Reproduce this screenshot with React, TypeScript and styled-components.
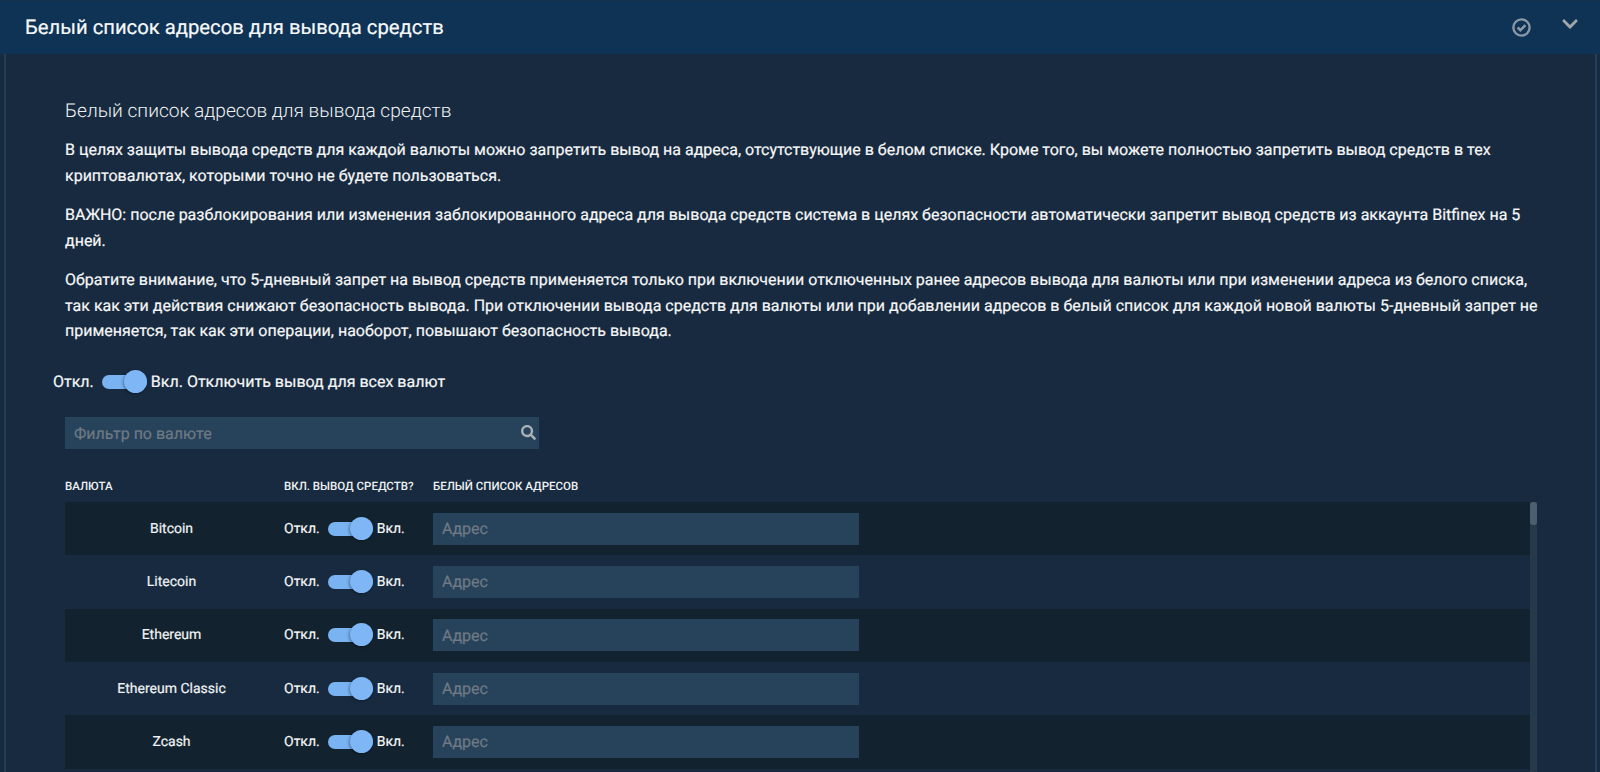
import React from 'react';
import styled, { createGlobalStyle } from 'styled-components';
import { FaChevronDown, FaSearch } from 'react-icons/fa';

const GlobalStyle = createGlobalStyle`
	html, body {
		margin: 0;
		height: 100%;
		overflow: hidden;
		background-color: #172a3f;
		font-family: Roboto, "Noto Sans", sans-serif;
		color: #f4f6f8;
		text-rendering: geometricPrecision;
		-webkit-text-stroke: 0.2px;
	}
	* {
		box-sizing: border-box;
	}
`;

const Panel = styled.div`
	display: flex;
	flex-direction: column;
	height: 772px;
	overflow: hidden;
`;

const Header = styled.header`
	display: flex;
	flex: none;
	align-items: center;
	height: 54px;
	padding: 0 21px 1px 25px;
	background-color: #0e3355;
	border-top: 1px solid #15304a;
`;

const HeaderTitle = styled.h1`
	flex: 1;
	margin: 0;
	font-size: 20.25px;
	font-weight: 400;
	color: #f7f8f9;
`;

const HeaderIcons = styled.div`
	display: flex;
	align-items: flex-start;
	gap: 30px;
	color: #8b98a6;
`;

const Chevron = styled(FaChevronDown)`
	width: 18px;
	height: 18px;
	margin-top: -3px;
	color: #a3a6a8;
`;

const Body = styled.main`
	display: flex;
	flex: 1;
	flex-direction: column;
	min-height: 0;
	margin: 0 3px 0 4px;
	padding: 46px 0 0 59px;
	border-left: 2px solid #223f59;
	border-right: 2px solid #223f59;
	background-color: #172a3f;
`;

const Heading = styled.h2`
	margin: 0 0 15px;
	font-size: 19.15px;
	line-height: 22px;
	font-weight: 300;
	-webkit-text-stroke: 0;
	color: #eef1f3;
`;

const Paragraph = styled.p`
	margin: 0 0 14px;
	width: 1480px;
	font-size: 16px;
	line-height: 25.5px;
	color: #f6f7f8;
`;

const MasterSwitch = styled.div`
	display: flex;
	align-items: center;
	height: 24px;
	margin: 12px 0 0 -12px;
	font-size: 16px;
`;

const SwitchRow = styled.div`
	display: flex;
	align-items: center;
	font-size: 14px;
	color: #f6f7f8;
`;

const Track = styled.span`
	position: relative;
	display: block;
	flex: none;
	width: 45px;
	height: 14px;
	margin: 0 4px 0 8px;
	border-radius: 7px;
	background-color: #79b3f2;
`;

const Knob = styled.span`
	position: absolute;
	top: -5px;
	right: 0;
	width: 23px;
	height: 23px;
	border-radius: 50%;
	background-color: #7fb6f6;
	box-shadow: -1px 1px 3px rgba(0, 0, 0, 0.35);
`;

const FilterBox = styled.div`
	position: relative;
	flex: none;
	width: 474px;
	margin-top: 23.5px;
`;

const FilterInput = styled.input`
	display: block;
	width: 100%;
	height: 32px;
	padding: 0 30px 0 9px;
	border: 0;
	background-color: #27435b;
	font: 16px Roboto, sans-serif;
	text-rendering: geometricPrecision;
	color: #f6f7f8;
	&::placeholder {
		color: #6f7a84;
		opacity: 1;
	}
`;

const SearchIcon = styled(FaSearch)`
	position: absolute;
	top: 8px;
	right: 3px;
	width: 15px;
	height: 15px;
	color: #a9b0b6;
`;

const ColumnHeader = styled.div`
	display: grid;
	flex: none;
	grid-template-columns: 219px 149px 1fr;
	align-items: center;
	height: 53px;
	padding-top: 20px;
	font-size: 11.5px;
	font-weight: 500;
	-webkit-text-stroke: 0;
	color: #eef1f3;
`;

const TableScroll = styled.div`
	display: flex;
	flex: 1;
	width: 1472px;
	min-height: 0;
`;

const Rows = styled.div`
	flex: 1;
`;

const Row = styled.div<{ $dark: boolean }>`
	display: grid;
	grid-template-columns: 219px 149px 1fr;
	align-items: center;
	height: 53.33px;
	background-color: ${(p) => (p.$dark ? '#12232f' : '#172a3f')};
`;

const CurrencyName = styled.div`
	padding-right: 6px;
	text-align: center;
	font-size: 14px;
	font-weight: 400;
	color: #f0f2f4;
`;

const AddressInput = styled.input`
	display: block;
	width: 426px;
	height: 32px;
	padding: 0 9px;
	border: 0;
	background-color: #27435b;
	font: 16px Roboto, sans-serif;
	text-rendering: geometricPrecision;
	color: #f6f7f8;
	&::placeholder {
		color: #6f7a84;
		opacity: 1;
	}
`;

const ScrollTrack = styled.div`
	position: relative;
	flex: none;
	width: 7px;
	background-color: #25394a;
`;

const ScrollThumb = styled.div`
	position: absolute;
	top: 0;
	left: 0;
	width: 7px;
	height: 23px;
	border-radius: 3px;
	background-color: #4c5f70;
`;

const currencies = ['Bitcoin', 'Litecoin', 'Ethereum', 'Ethereum Classic', 'Zcash'];

function Toggle() {
	return (
		<Track>
			<Knob />
		</Track>
	);
}

function CheckCircle() {
	return (
		<svg width="19" height="19" viewBox="0 0 19 19" fill="none" stroke="currentColor">
			<circle cx="9.5" cy="9.5" r="8.1" strokeWidth="2.4" />
			<path d="M5.6 9.5l2.8 2.7 5-5" strokeWidth="2.6" />
		</svg>
	);
}

function App() {
	return (
		<Panel>
			<GlobalStyle />
			<Header>
				<HeaderTitle>Белый список адресов для вывода средств</HeaderTitle>
				<HeaderIcons>
					<CheckCircle />
					<Chevron />
				</HeaderIcons>
			</Header>
			<Body>
				<Heading>Белый список адресов для вывода средств</Heading>
				<Paragraph>
					В целях защиты вывода средств для каждой валюты можно запретить вывод на адреса, отсутствующие в белом списке. Кроме того, вы можете полностью запретить вывод средств в тех криптовалютах, которыми точно не будете пользоваться.
				</Paragraph>
				<Paragraph>
					ВАЖНО: после разблокирования или изменения заблокированного адреса для вывода средств система в целях безопасности автоматически запретит вывод средств из аккаунта Bitfinex на 5 дней.
				</Paragraph>
				<Paragraph>
					Обратите внимание, что 5-дневный запрет на вывод средств применяется только при включении отключенных ранее адресов вывода для валюты или при изменении адреса из белого списка, так как эти действия снижают безопасность вывода. При отключении вывода средств для валюты или при добавлении адресов в белый список для каждой новой валюты 5-дневный запрет не применяется, так как эти операции, наоборот, повышают безопасность вывода.
				</Paragraph>
				<MasterSwitch>
					Откл.
					<Toggle />
					Вкл. Отключить вывод для всех валют
				</MasterSwitch>
				<FilterBox>
					<FilterInput placeholder="Фильтр по валюте" />
					<SearchIcon />
				</FilterBox>
				<ColumnHeader>
					<span>ВАЛЮТА</span>
					<span>ВКЛ. ВЫВОД СРЕДСТВ?</span>
					<span>БЕЛЫЙ СПИСОК АДРЕСОВ</span>
				</ColumnHeader>
				<TableScroll>
					<Rows>
						{currencies.map((name, i) => (
							<Row key={name} $dark={i % 2 === 0}>
								<CurrencyName>{name}</CurrencyName>
								<SwitchRow>
									Откл.
									<Toggle />
									Вкл.
								</SwitchRow>
								<AddressInput placeholder="Адрес" />
							</Row>
						))}
					</Rows>
					<ScrollTrack>
						<ScrollThumb />
					</ScrollTrack>
				</TableScroll>
			</Body>
		</Panel>
	);
}

export default App;
